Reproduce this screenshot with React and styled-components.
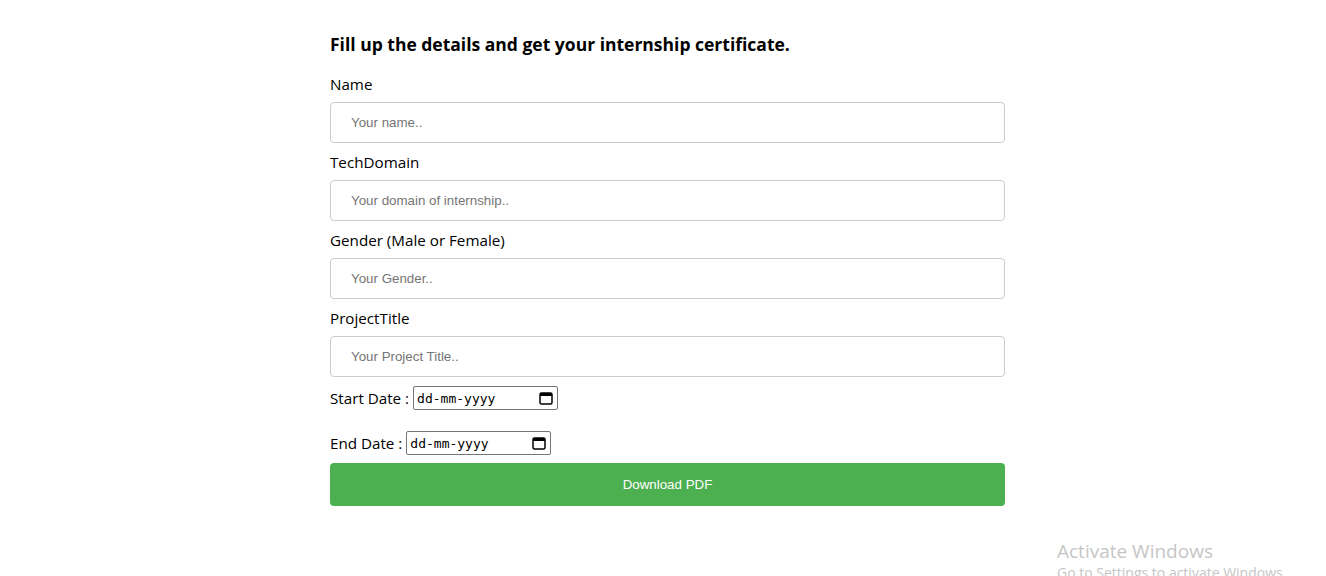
import React from "react";
import styled, { createGlobalStyle } from "styled-components";

const Global = createGlobalStyle`
  html, body { margin: 0; padding: 0; background: #fff; }
  body { font-family: "Segoe UI", "Open Sans", "Noto Sans", sans-serif; color: #000; }
  * { box-sizing: border-box; }
`;

const Page = styled.div`
  width: 1326px;
  height: 576px;
  overflow: hidden;
  position: relative;
  padding-top: 32px;
`;

const Form = styled.form`
  width: 675px;
  margin-left: 330px;
  display: flex;
  flex-direction: column;
`;

const Heading = styled.h3`
  margin: 0 0 17px;
  font-size: 17.5px;
  line-height: 24px;
  font-weight: 700;
`;

const Label = styled.label`
  display: block;
  font-size: 15.2px;
  line-height: 21px;
  margin-top: 1px;
  font-weight: 400;
`;

const Input = styled.input`
  width: 100%;
  height: 41px;
  margin: 7px 0 8px;
  padding: 0 20px;
  border: 1px solid #ccc;
  border-radius: 4px;
  font-family: "Liberation Sans", Arial, sans-serif;
  font-size: 13.33px;
  color: #000;
  outline: none;
  &::placeholder { color: #757575; }
`;

const DateRow = styled.div`
  display: flex;
  align-items: center;
  gap: 4px;
  height: 24px;
  margin-top: ${(p) => p.$mt}px;
`;

const DateLabel = styled.span`
  font-size: 15.2px;
  line-height: 22px;
  margin-top: -1px;
`;

const DateBox = styled.div`
  width: 145px;
  height: 24px;
  border: 1px solid #767676;
  border-radius: 2px;
  display: flex;
  align-items: center;
  justify-content: space-between;
  padding: 0 4px 0 3px;
  font-family: "DejaVu Sans Mono", "Liberation Mono", monospace;
  font-size: 13px;
  color: #000;
`;

const Button = styled.button`
  margin-top: 8px;
  width: 100%;
  height: 43px;
  border: none;
  border-radius: 4px;
  background: #4caf50;
  color: #fff;
  font-family: "Liberation Sans", Arial, sans-serif;
  font-size: 13.33px;
  cursor: pointer;
`;

const Watermark = styled.div`
  position: absolute;
  left: 1057px;
  top: 540px;
  color: #c6c6c6;
  font-family: "Segoe UI", "Open Sans", sans-serif;
  line-height: 1.2;
  white-space: nowrap;
`;

const WmTitle = styled.div`
  font-size: 19px;
`;

const WmSub = styled.div`
  font-size: 14px;
  margin-top: 2px;
`;

const CalIcon = () => (
  <svg width="14" height="14" viewBox="0 0 14 14" fill="none">
    <rect x="1" y="2" width="12" height="11" rx="1.5" stroke="#000" strokeWidth="1.5" />
    <rect x="1" y="2" width="12" height="3" fill="#000" />
  </svg>
);

const DateField = ({ label, mt }) => (
  <DateRow $mt={mt}>
    <DateLabel>{label}</DateLabel>
    <DateBox>
      <span>dd-mm-yyyy</span>
      <CalIcon />
    </DateBox>
  </DateRow>
);

export default function App() {
  return (
    <Page>
      <Global />
      <Form onSubmit={(e) => e.preventDefault()}>
        <Heading>Fill up the details and get your internship certificate.</Heading>
        <Label>Name</Label>
        <Input placeholder="Your name.." />
        <Label>TechDomain</Label>
        <Input placeholder="Your domain of internship.." />
        <Label>Gender (Male or Female)</Label>
        <Input placeholder="Your Gender.." />
        <Label>ProjectTitle</Label>
        <Input placeholder="Your Project Title.." />
        <DateField label="Start Date :" mt={1} />
        <DateField label="End Date :" mt={21} />
        <Button type="submit">Download PDF</Button>
      </Form>
      <Watermark>
        <WmTitle>Activate Windows</WmTitle>
        <WmSub>Go to Settings to activate Windows.</WmSub>
      </Watermark>
    </Page>
  );
}
